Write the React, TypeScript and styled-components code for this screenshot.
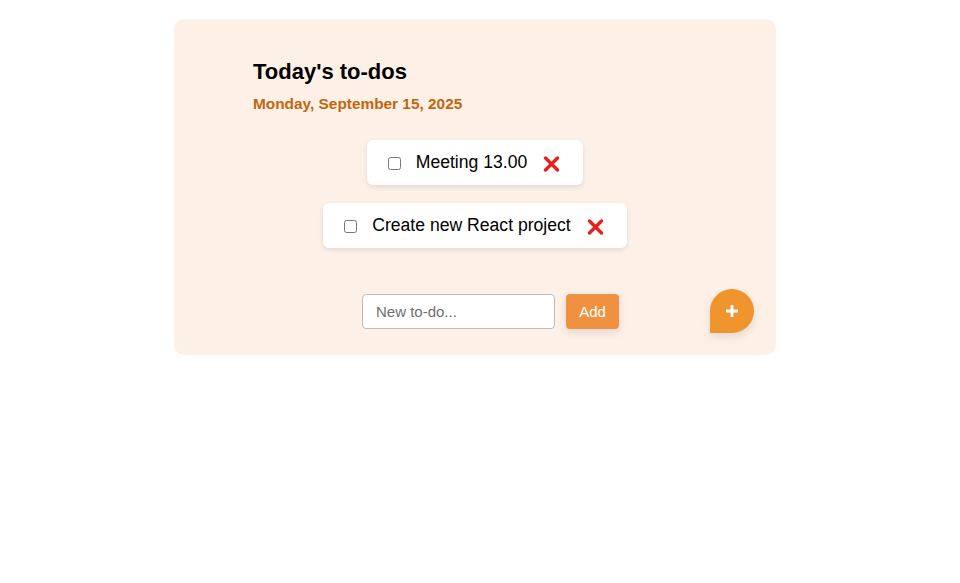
import React from "react";
import styled, { createGlobalStyle } from "styled-components";

const GlobalStyle = createGlobalStyle`
  html, body { margin: 0; padding: 0; background: #ffffff; }
  body { font-family: "Liberation Sans", Arial, Helvetica, sans-serif; color: #000; }
  * { box-sizing: border-box; }
`;

const Page = styled.div`
  padding: 19px 0 0 174px;
`;

const Card = styled.section`
  width: 602px;
  background: #fdf0e7;
  border-radius: 10px;
  padding: 41px 22px 22px 22px;
  display: flex;
  flex-direction: column;
`;

const Header = styled.header`
  padding: 0 57px;
  display: flex;
  flex-direction: column;
  gap: 11px;
`;

const Title = styled.h2`
  margin: 0;
  font-size: 22px;
  font-weight: 700;
  line-height: 24px;
  color: #000;
`;

const DateLine = styled.div`
  font-size: 15.4px;
  font-weight: 700;
  line-height: 17px;
  color: #c2660c;
`;

const List = styled.ul`
  list-style: none;
  margin: 28px 0 0 0;
  padding: 0;
  display: flex;
  flex-direction: column;
  align-items: center;
  gap: 18px;
`;

const Item = styled.li`
  height: 45px;
  background: #ffffff;
  border-radius: 6px;
  box-shadow: 0 2px 5px rgba(0, 0, 0, 0.1);
  display: flex;
  align-items: center;
  padding: 0 23px 0 17px;
`;

const Check = styled.input`
  width: 13px;
  height: 13px;
  margin: 0 15px 0 4px;
  position: relative;
  top: 1px;
`;

const Label = styled.span`
  font-size: 17.6px;
  line-height: 20px;
  position: relative;
  top: -1px;
`;

const DeleteButton = styled.button`
  border: none;
  background: none;
  padding: 0;
  margin-left: 16px;
  width: 17px;
  height: 17px;
  display: flex;
  align-items: center;
  justify-content: center;
  cursor: pointer;
  position: relative;
  top: 1px;
`;

const Row = styled.form`
  margin-top: 41px;
  display: flex;
  align-items: center;
`;

const TextInput = styled.input`
  margin-left: 166px;
  width: 193px;
  height: 35px;
  border: 1px solid #bdbdbd;
  border-radius: 4px;
  padding: 0 13px;
  font-family: "Liberation Sans", Arial, sans-serif;
  font-size: 15px;
  background: #fff;
  &::placeholder { color: #6f6f6f; }
`;

const AddButton = styled.button`
  margin-left: 11px;
  width: 53px;
  height: 35px;
  border: none;
  border-radius: 4px;
  background: #ef9140;
  color: #ffffff;
  font-family: "Liberation Sans", Arial, sans-serif;
  font-size: 15px;
  box-shadow: 0 3px 8px rgba(0, 0, 0, 0.12);
  cursor: pointer;
`;

const Fab = styled.button`
  margin-left: auto;
  width: 44px;
  height: 44px;
  border: none;
  border-radius: 50% 50% 50% 0;
  background: #f0942e;
  box-shadow: 0 4px 8px rgba(0, 0, 0, 0.1);
  display: flex;
  align-items: center;
  justify-content: center;
  padding: 0;
  cursor: pointer;
`;

const XIcon = () => (
  <svg width="17" height="16" viewBox="0 0 17 16" aria-hidden="true">
    <path d="M2.5 2 L14.5 14 M14.5 2 L2.5 14" stroke="#e5211b" strokeWidth="3.4" strokeLinecap="round" />
  </svg>
);

const PlusIcon = () => (
  <svg width="14" height="14" viewBox="0 0 14 14" aria-hidden="true">
    <path d="M7 1 V13 M1 7 H13" stroke="#ffffff" strokeWidth="2.8" />
  </svg>
);

const todos = ["Meeting 13.00", "Create new React project"];

export default function App() {
  return (
    <>
      <GlobalStyle />
      <Page>
        <Card>
          <Header>
            <Title>Today's to-dos</Title>
            <DateLine>Monday, September 15, 2025</DateLine>
          </Header>
          <List>
            {todos.map((t) => (
              <Item key={t}>
                <Check type="checkbox" />
                <Label>{t}</Label>
                <DeleteButton type="button" aria-label="Delete">
                  <XIcon />
                </DeleteButton>
              </Item>
            ))}
          </List>
          <Row onSubmit={(e) => e.preventDefault()}>
            <TextInput placeholder="New to-do..." />
            <AddButton type="submit">Add</AddButton>
            <Fab type="button" aria-label="Add">
              <PlusIcon />
            </Fab>
          </Row>
        </Card>
      </Page>
    </>
  );
}
